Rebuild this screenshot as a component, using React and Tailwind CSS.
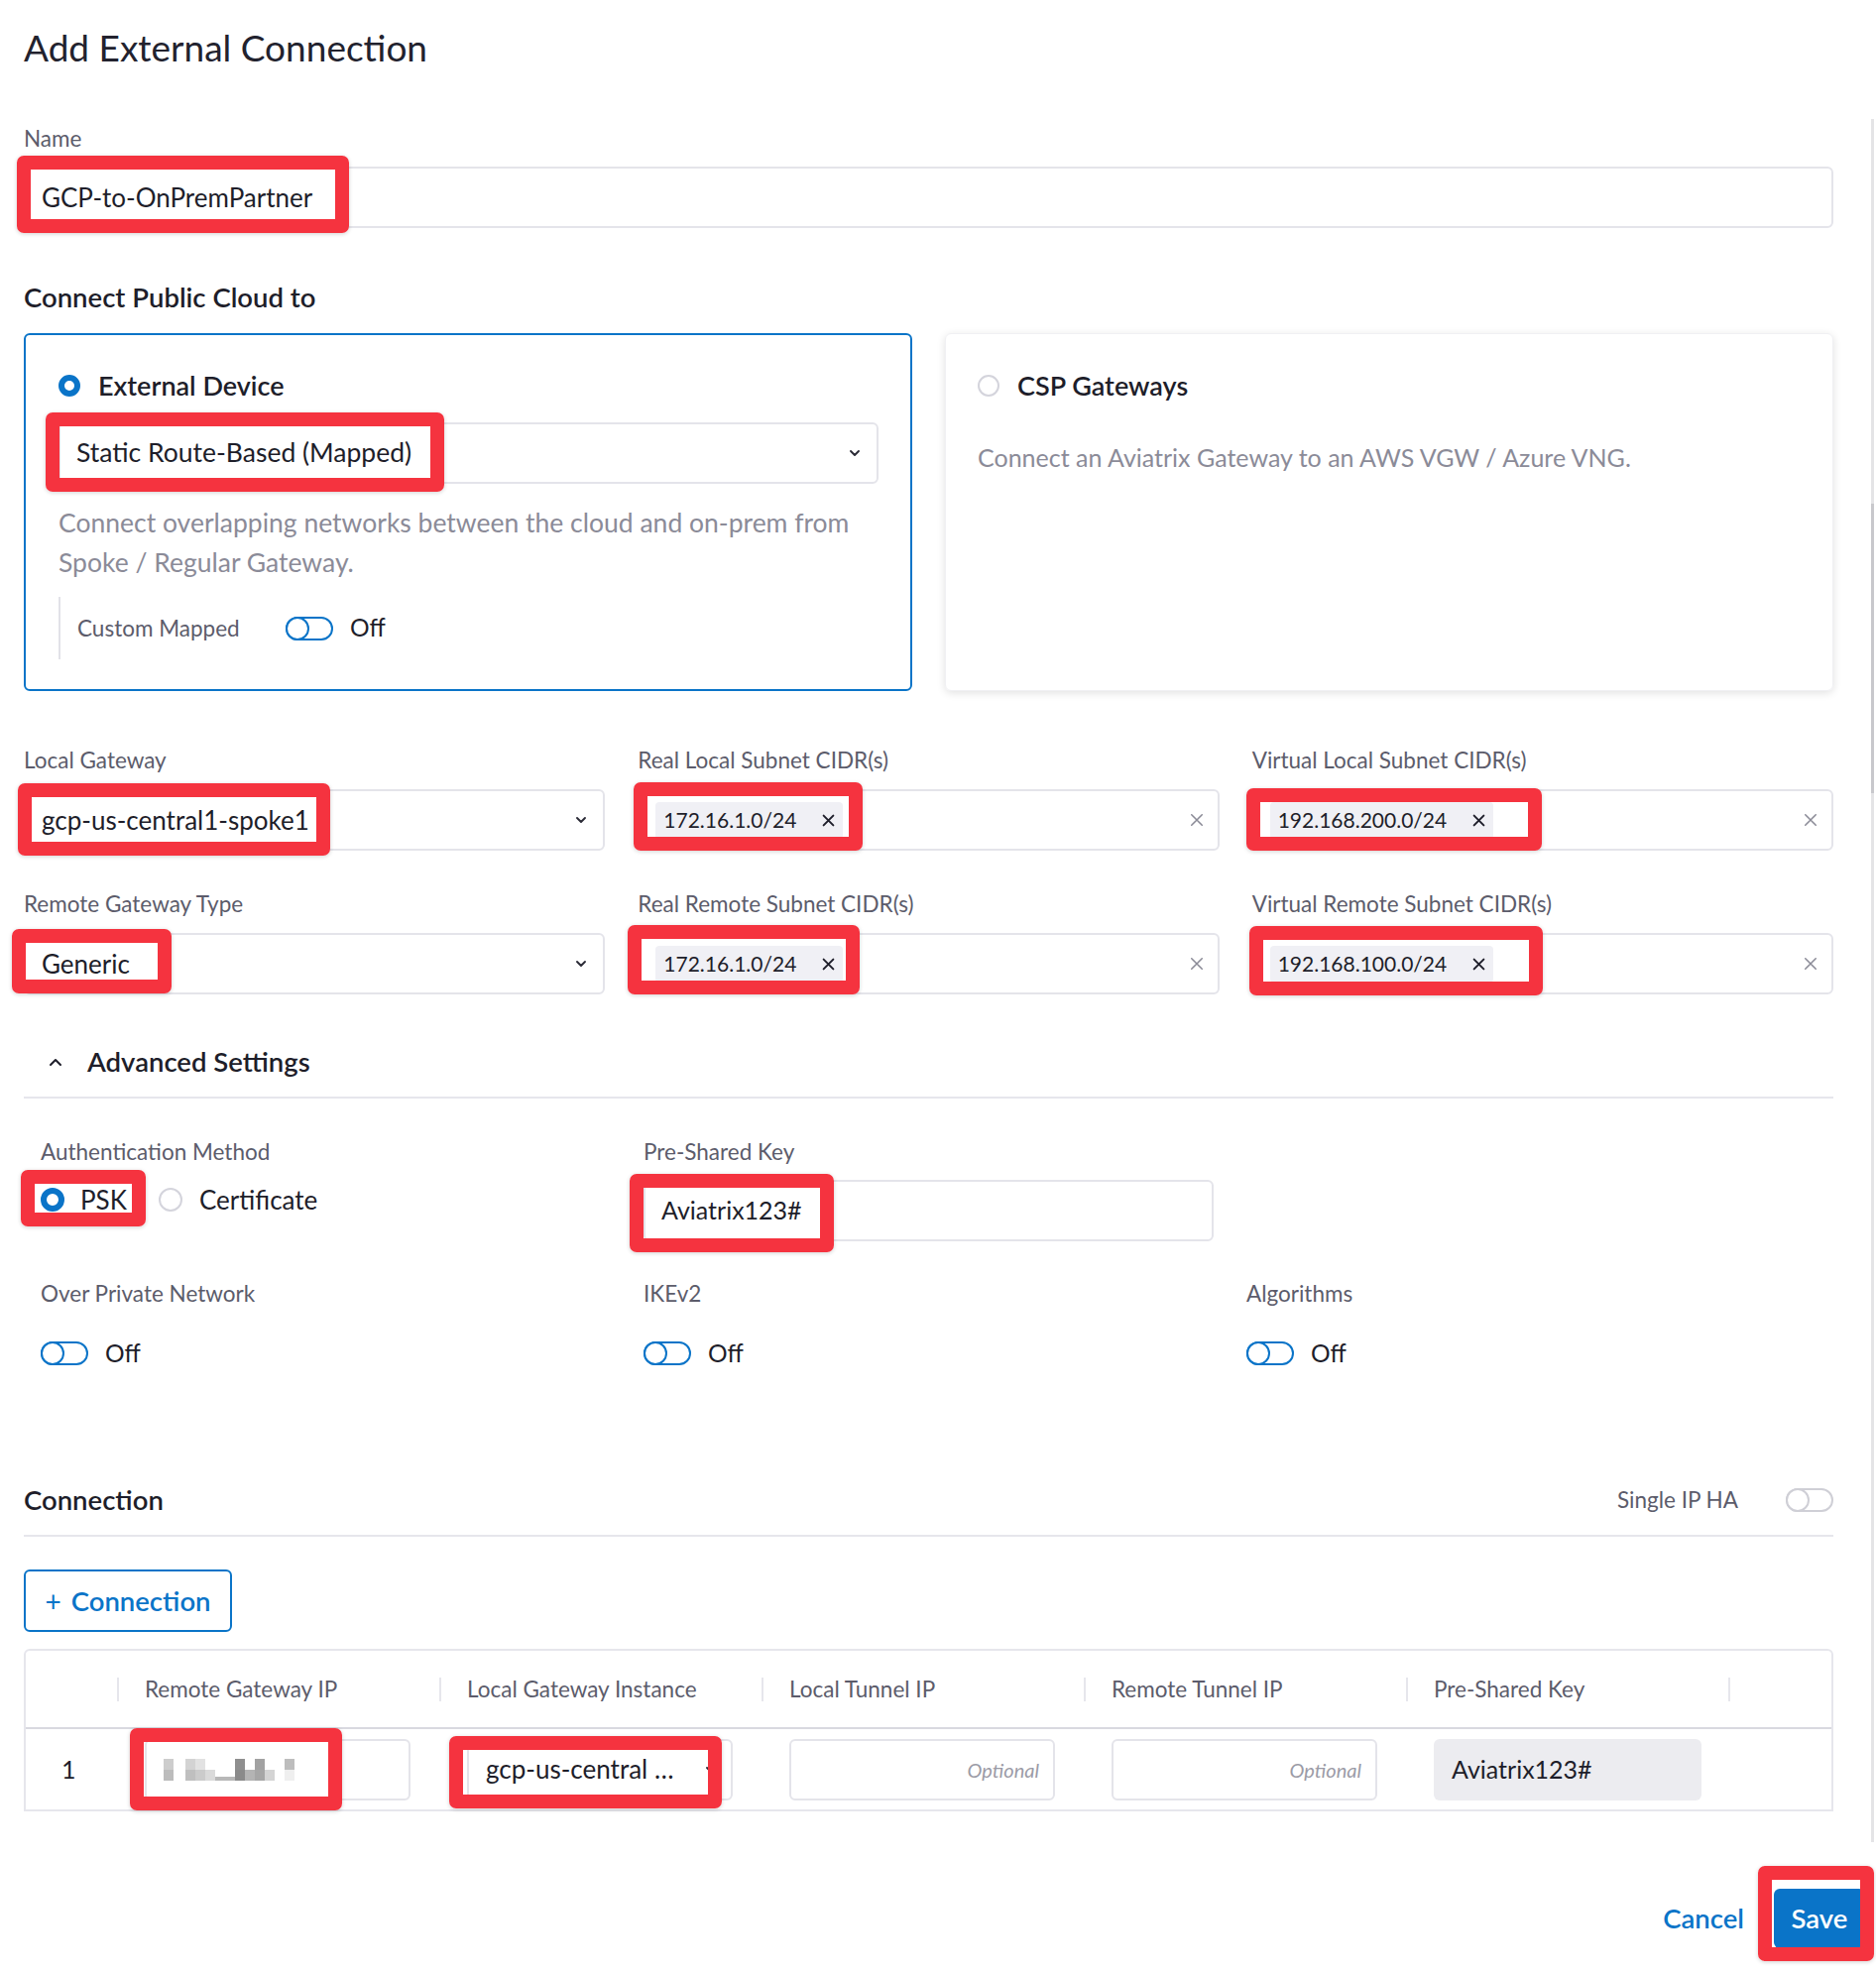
import React from 'react';

// red annotation frame drawn over a field
const Mark = ({ className }) => (
  <div
    className={`pointer-events-none absolute z-10 rounded-[7px] border-[14px] border-[#f5333f] shadow-[0_1px_4px_rgba(0,0,0,0.18)] ${className}`}
  />
);

const Label = ({ children }) => (
  <div className="h-[30px] text-[22.5px] leading-[30px] text-[#5c5c6b]">{children}</div>
);

const Chevron = () => (
  <svg width="12" height="8" viewBox="0 0 12 8" className="ml-auto shrink-0">
    <polyline points="2,2 6,6 10,2" fill="none" stroke="#2a2a36" strokeWidth="1.9" strokeLinecap="round" strokeLinejoin="round" />
  </svg>
);

const Cross = ({ color = '#1e1e2a', size = 13, width = 1.8 }) => (
  <svg width={size} height={size} viewBox="0 0 12 12" className="shrink-0">
    <path d="M1.5 1.5 L10.5 10.5 M10.5 1.5 L1.5 10.5" stroke={color} strokeWidth={width} strokeLinecap="round" />
  </svg>
);

const Toggle = ({ gray }) => (
  <svg width="48" height="24" viewBox="0 0 48 24" className="shrink-0">
    <rect x="1" y="1" width="46" height="22" rx="11" fill="white" stroke={gray ? '#cfcfd6' : '#0a74c8'} strokeWidth="2" />
    <circle cx="12" cy="12" r="11" fill="white" stroke={gray ? '#cfcfd6' : '#0a74c8'} strokeWidth="2" />
  </svg>
);

const RadioOn = ({ size = 'w-[22px] h-[22px]' }) => (
  <span className={`${size} shrink-0 rounded-full border-[6px] border-[#0a74c8] bg-white`} />
);

const RadioOff = ({ size = 'w-[22px] h-[22px]' }) => (
  <span className={`${size} shrink-0 rounded-full border-2 border-[#d4d4dc] bg-white`} />
);

const Chip = ({ text }) => (
  <div className="flex h-[37px] items-center gap-[26px] rounded-[4px] bg-[#f0f0f5] px-[8px] text-[21px] text-[#1e1e2a]">
    {text}
    <Cross />
  </div>
);

const ToggleField = ({ label }) => (
  <div>
    <Label>{label}</Label>
    <div className="mt-[14px] flex h-[62px] items-center gap-[17px] text-[24.5px]">
      <Toggle />
      Off
    </div>
  </div>
);

// mosaic that hides the remote gateway address
const Mosaic = () => {
  const cells = [
    [0, 0, '#cdcdcd'], [0, 11, '#bcbcbc'],
    [22, 0, '#d3d3d3'], [22, 11, '#bfbfbf'],
    [32, 0, '#e2e2e2'], [32, 11, '#cbcbcb'],
    [42, 11, '#dadada'],
    [52, 18, '#b8b8b8'], [62, 18, '#b8b8b8'],
    [72, 0, '#8f8f8f'], [72, 11, '#8a8a8a'],
    [82, 11, '#b4b4b4'],
    [92, 0, '#a2a2a2'], [92, 11, '#a6a6a6'],
    [102, 11, '#d4d4d4'],
    [122, 0, '#bdbdbd'], [122, 11, '#efefef'],
  ];
  return (
    <svg width="132" height="22" viewBox="0 0 132 22">
      {cells.map(([x, y, c], i) => (
        <rect key={i} x={x} y={y} width="10" height={y === 18 ? 4 : 11} fill={c} />
      ))}
    </svg>
  );
};

const App = () => {
  return (
    <div className="relative h-[1991px] w-[1892px] overflow-hidden bg-white font-['Lato',sans-serif] text-[#1e1e2a]">
      <div className="pl-[24px] pr-[43px] pt-[24px]">
        <h1 className="h-[48px] text-[37px] leading-[48px] text-[#22222e]">Add External Connection</h1>

        <div className="mt-[53px]">
          <Label>Name</Label>
          <div className="relative mt-[13px] flex h-[62px] items-center rounded-[6px] border-2 border-[#e4e4ea] px-[16px] text-[26px]">
            GCP-to-OnPremPartner
            <Mark className="left-[-9px] top-[-13px] h-[78px] w-[335px]" />
          </div>
        </div>

        <h2 className="mt-[53px] h-[34px] text-[27.5px] font-semibold leading-[34px]">Connect Public Cloud to</h2>

        <div className="mt-[19px] grid h-[361px] grid-cols-2 gap-[33px]">
          <div className="rounded-[6px] border-2 border-[#0a74c8] pl-[33px] pr-[32px] pt-[34px]">
            <div className="flex h-[34px] items-center gap-[18px]">
              <RadioOn />
              <span className="text-[27px] font-semibold">External Device</span>
            </div>
            <div className="relative mt-[20px] flex h-[62px] items-center rounded-[6px] border-2 border-[#e4e4ea] px-[16px] text-[26.5px]">
              Static Route-Based (Mapped)
              <Chevron />
              <Mark className="left-[-15px] top-[-12px] h-[80px] w-[402px]" />
            </div>
            <p className="mt-[19px] text-[26.5px] leading-[40px] text-[#8b8b98]">
              Connect overlapping networks between the cloud and on-prem from Spoke / Regular Gateway.
            </p>
            <div className="mt-[15px] flex h-[63px] items-center border-l-2 border-[#e2e2e8] pl-[17px]">
              <span className="w-[210px] text-[22.5px] text-[#5c5c6b]">Custom Mapped</span>
              <Toggle />
              <span className="ml-[17px] text-[24.5px]">Off</span>
            </div>
          </div>

          <div className="rounded-[6px] border border-[#f0f0f3] pl-[32px] pt-[35px] shadow-[0_2px_8px_rgba(0,0,0,0.12)]">
            <div className="flex h-[34px] items-center gap-[18px]">
              <RadioOff />
              <span className="text-[27px] font-semibold">CSP Gateways</span>
            </div>
            <p className="mt-[35px] text-[25px] leading-[40px] text-[#8b8b98]">
              Connect an Aviatrix Gateway to an AWS VGW / Azure VNG.
            </p>
          </div>
        </div>

        <div className="mt-[55px] grid grid-cols-3 gap-x-[33px] gap-y-[39px]">
          <div>
            <Label>Local Gateway</Label>
            <div className="relative mt-[14px] flex h-[62px] items-center rounded-[6px] border-2 border-[#e4e4ea] px-[16px] text-[26px]">
              gcp-us-central1-spoke1
              <Chevron />
              <Mark className="left-[-8px] top-[-8px] h-[73px] w-[315px]" />
            </div>
          </div>
          <div>
            <Label>Real Local Subnet CIDR(s)</Label>
            <div className="relative mt-[14px] flex h-[62px] items-center rounded-[6px] border-2 border-[#e4e4ea] pl-[16px] pr-[14px]">
              <Chip text="172.16.1.0/24" />
              <span className="ml-auto"><Cross color="#8a8a96" size={14} width={1.3} /></span>
              <Mark className="left-[-6px] top-[-9px] h-[69px] w-[231px]" />
            </div>
          </div>
          <div>
            <Label>Virtual Local Subnet CIDR(s)</Label>
            <div className="relative mt-[14px] flex h-[62px] items-center rounded-[6px] border-2 border-[#e4e4ea] pl-[16px] pr-[14px]">
              <Chip text="192.168.200.0/24" />
              <span className="ml-auto"><Cross color="#8a8a96" size={14} width={1.3} /></span>
              <Mark className="left-[-8px] top-[-3px] h-[63px] w-[298px]" />
            </div>
          </div>

          <div>
            <Label>Remote Gateway Type</Label>
            <div className="relative mt-[14px] flex h-[62px] items-center rounded-[6px] border-2 border-[#e4e4ea] px-[16px] text-[26px]">
              Generic
              <Chevron />
              <Mark className="left-[-14px] top-[-6px] h-[65px] w-[161px]" />
            </div>
          </div>
          <div>
            <Label>Real Remote Subnet CIDR(s)</Label>
            <div className="relative mt-[14px] flex h-[62px] items-center rounded-[6px] border-2 border-[#e4e4ea] pl-[16px] pr-[14px]">
              <Chip text="172.16.1.0/24" />
              <span className="ml-auto"><Cross color="#8a8a96" size={14} width={1.3} /></span>
              <Mark className="left-[-12px] top-[-10px] h-[70px] w-[234px]" />
            </div>
          </div>
          <div>
            <Label>Virtual Remote Subnet CIDR(s)</Label>
            <div className="relative mt-[14px] flex h-[62px] items-center rounded-[6px] border-2 border-[#e4e4ea] pl-[16px] pr-[14px]">
              <Chip text="192.168.100.0/24" />
              <span className="ml-auto"><Cross color="#8a8a96" size={14} width={1.3} /></span>
              <Mark className="left-[-5px] top-[-9px] h-[70px] w-[296px]" />
            </div>
          </div>
        </div>

        <div className="mt-[33px] flex h-[72px] items-center gap-[25px] border-b-2 border-[#e6e6ec] pl-[25px]">
          <svg width="14" height="9" viewBox="0 0 14 9">
            <polyline points="2,7 7,2 12,7" fill="none" stroke="#1e1e2a" strokeWidth="2" strokeLinecap="round" strokeLinejoin="round" />
          </svg>
          <span className="text-[27.5px] font-semibold">Advanced Settings</span>
        </div>

        <div className="mt-[39px] grid grid-cols-3 gap-x-[33px] gap-y-[38px] px-[17px]">
          <div>
            <Label>Authentication Method</Label>
            <div className="relative mt-[13px] flex h-[40px] items-center text-[26px]">
              <RadioOn size="w-[24px] h-[24px]" />
              <span className="ml-[16px]">PSK</span>
              <span className="ml-[32px]"><RadioOff size="block w-[24px] h-[24px]" /></span>
              <span className="ml-[17px]">Certificate</span>
              <Mark className="left-[-20px] top-[-10px] h-[57px] w-[126px]" />
            </div>
          </div>
          <div>
            <Label>Pre-Shared Key</Label>
            <div className="relative mt-[13px] flex h-[62px] items-center rounded-[6px] border-2 border-[#e4e4ea] px-[16px] text-[25px]">
              Aviatrix123#
              <Mark className="left-[-16px] top-[-8px] h-[79px] w-[206px]" />
            </div>
          </div>
          <div />
          <ToggleField label="Over Private Network" />
          <ToggleField label="IKEv2" />
          <ToggleField label="Algorithms" />
        </div>

        <div className="mt-[82px] flex h-[72px] items-center border-b-2 border-[#e6e6ec]">
          <span className="text-[27.5px] font-semibold">Connection</span>
          <span className="ml-auto mr-[48px] text-[22.5px] text-[#5c5c6b]">Single IP HA</span>
          <Toggle gray />
        </div>

        <button className="mt-[33px] flex h-[63px] w-[210px] items-center justify-center gap-[10px] rounded-[6px] border-2 border-[#0a74c8] text-[27.5px] font-semibold text-[#0a74c8]">
          <span className="text-[28px] font-normal">+</span>
          Connection
        </button>

        <div className="mt-[17px] rounded-t-[6px] border-2 border-[#e6e6ec]">
          <div className="grid h-[79px] grid-cols-[92px_325px_325px_325px_325px_325px_1fr] items-center border-b-2 border-[#d9d9e0] text-[22.5px] text-[#5c5c6b]">
            <div />
            {['Remote Gateway IP', 'Local Gateway Instance', 'Local Tunnel IP', 'Remote Tunnel IP', 'Pre-Shared Key', ''].map((h, i) => (
              <div key={i} className="flex h-[24px] items-center border-l-2 border-[#e6e6ec] pl-[26px]">
                {h}
              </div>
            ))}
          </div>
          <div className="grid h-[81px] grid-cols-[92px_325px_325px_325px_325px_325px_1fr] items-center">
            <div className="pl-[36px] text-[25px]">1</div>
            <div className="pl-[28px]">
              <div className="relative flex h-[62px] w-[268px] items-center rounded-[6px] border-2 border-[#e4e4ea] pl-[17px]">
                <Mosaic />
                <Mark className="left-[-17px] top-[-13px] h-[83px] w-[214px]" />
              </div>
            </div>
            <div className="pl-[28px]">
              <div className="relative flex h-[62px] w-[268px] items-center rounded-[6px] border-2 border-[#e4e4ea] pl-[17px] pr-[14px] text-[26px]">
                gcp-us-central&nbsp;…
                <Chevron />
                <Mark className="left-[-20px] top-[-5px] h-[73px] w-[275px]" />
              </div>
            </div>
            <div className="pl-[28px]">
              <div className="flex h-[62px] w-[268px] items-center justify-end rounded-[6px] border-2 border-[#e4e4ea] pr-[14px] text-[20px] italic text-[#9b9ba6]">
                Optional
              </div>
            </div>
            <div className="pl-[28px]">
              <div className="flex h-[62px] w-[268px] items-center justify-end rounded-[6px] border-2 border-[#e4e4ea] pr-[14px] text-[20px] italic text-[#9b9ba6]">
                Optional
              </div>
            </div>
            <div className="pl-[28px]">
              <div className="flex h-[62px] w-[270px] items-center rounded-[6px] bg-[#ececf0] pl-[18px] text-[25px]">
                Aviatrix123#
              </div>
            </div>
            <div />
          </div>
        </div>
      </div>

      <div className="mt-[78px] flex items-center justify-end gap-[30px] pr-[11px]">
        <span className="text-[27.5px] font-semibold text-[#0a74c8]">Cancel</span>
        <div className="relative">
          <button className="flex h-[60px] w-[92px] items-center justify-center rounded-[6px] bg-[#0a74c8] text-[27.5px] font-semibold text-white">
            Save
          </button>
          <Mark className="left-[-16px] top-[-23px] h-[96px] w-[117px]" />
        </div>
      </div>

      <div className="absolute right-[2px] top-[120px] flex h-[1738px] w-[3px] flex-col bg-[#e4e4e6]">
        <div className="mt-[388px] h-[292px] bg-[#c8c8cc]" />
      </div>
    </div>
  );
};

export default App;
